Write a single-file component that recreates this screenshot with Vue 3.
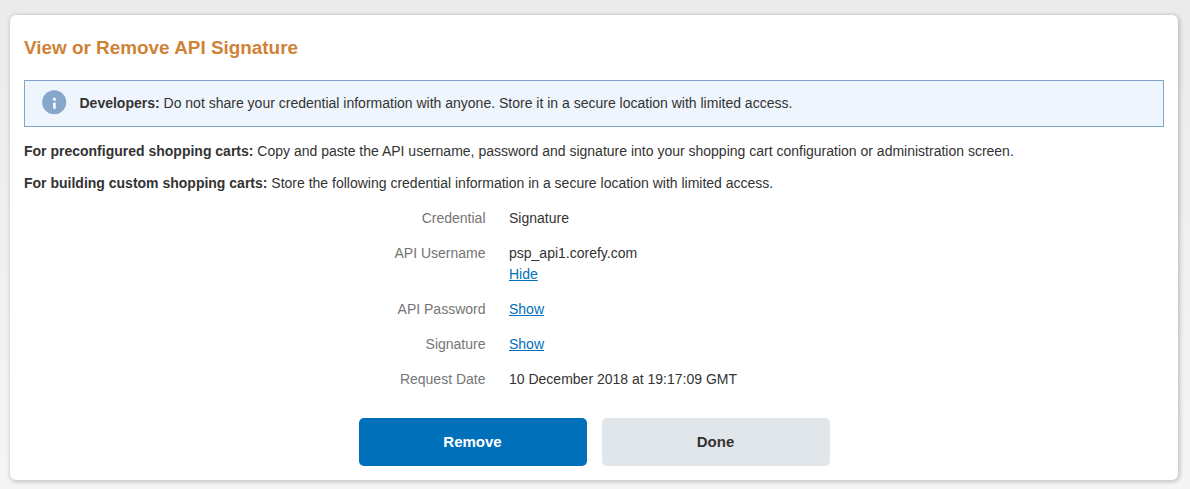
<script setup>
const rows = [
  { label: 'Credential', lines: [{ text: 'Signature' }] },
  { label: 'API Username', lines: [{ text: 'psp_api1.corefy.com' }, { text: 'Hide', link: true }] },
  { label: 'API Password', lines: [{ text: 'Show', link: true }] },
  { label: 'Signature', lines: [{ text: 'Show', link: true }] },
  { label: 'Request Date', lines: [{ text: '10 December 2018 at 19:17:09 GMT' }] },
]
</script>

<template>
  <div class="page">
    <main class="card">
      <h1 class="title">View or Remove API Signature</h1>
      <div class="notice">
        <svg class="info" width="25" height="25" viewBox="0 0 25 25" aria-hidden="true">
          <circle cx="12.2" cy="12.2" r="12" fill="#86a7c9" />
          <circle cx="12.4" cy="9.3" r="1.7" fill="#eef5fc" />
          <rect x="11" y="12.6" width="2.8" height="6.2" fill="#eef5fc" />
        </svg>
        <p><b>Developers:</b> Do not share your credential information with anyone. Store it in a secure location with limited access.</p>
      </div>
      <p class="para"><b>For preconfigured shopping carts:</b> Copy and paste the API username, password and signature into your shopping cart configuration or administration screen.</p>
      <p class="para second"><b>For building custom shopping carts:</b> Store the following credential information in a secure location with limited access.</p>
      <dl class="details">
        <div v-for="row in rows" :key="row.label" class="row">
          <dt>{{ row.label }}</dt>
          <dd>
            <div v-for="line in row.lines" :key="line.text">
              <a v-if="line.link" href="#" @click.prevent>{{ line.text }}</a>
              <template v-else>{{ line.text }}</template>
            </div>
          </dd>
        </div>
      </dl>
      <div class="actions">
        <button type="button" class="btn primary">Remove</button>
        <button type="button" class="btn secondary">Done</button>
      </div>
    </main>
  </div>
</template>

<style>
html, body { margin: 0; background: #f0f0f0; }
</style>

<style scoped>
.page {
  height: 489px;
  box-sizing: border-box;
  padding: 15px 12px 9px 10px;
  background: linear-gradient(#ebebeb, #f5f5f5);
  overflow: hidden;
  font-family: "Liberation Sans", Arial, sans-serif;
  font-size: 14px;
  line-height: 21px;
  color: #333;
}
.card {
  height: 465px;
  box-sizing: border-box;
  padding: 1px 14px 0;
  background: #fff;
  border-radius: 6px;
  box-shadow: 1px 1px 4px 1px rgba(0, 0, 0, 0.2);
}
.title {
  margin: 18px 0 0;
  font-size: 18.9px;
  line-height: 28px;
  font-weight: 700;
  color: #cf8238;
}
.notice {
  display: flex;
  align-items: center;
  gap: 12.5px;
  height: 47px;
  box-sizing: border-box;
  margin-top: 18px;
  padding: 0 17px;
  background: #eef5fc;
  border: 1px solid #7fa5c9;
}
.notice p { margin: 0; }
.info { flex: none; margin-bottom: 2px; }
.para { margin: 14px 0 0; }
.second { margin-top: 11px; }
.details { margin: 14px 0 0; }
.row {
  display: grid;
  grid-template-columns: 461.5px 1fr;
  column-gap: 23.5px;
  margin-bottom: 14px;
}
dt { text-align: right; color: #757575; }
dd { margin: 0; }
a { color: #0070ba; text-decoration: underline; }
.actions {
  display: flex;
  justify-content: center;
  gap: 15px;
  margin-top: 28px;
}
.btn {
  width: 228px;
  height: 48px;
  padding: 0 0 2px;
  border: 0;
  border-radius: 5px;
  font: 700 15px/21px "Liberation Sans", Arial, sans-serif;
}
.primary { background: #0070ba; color: #fff; }
.secondary { background: #e1e6ea; color: #333; }
</style>
